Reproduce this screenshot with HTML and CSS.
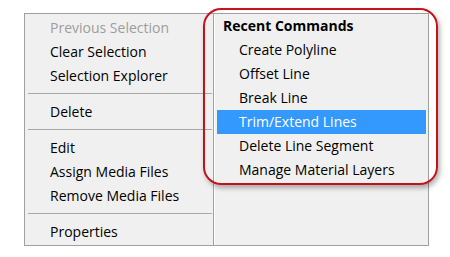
FILE: index.html
```html
<!DOCTYPE html>
<html>
<head>
<meta charset="utf-8">
<link rel="stylesheet" href="styles.css">
</head>
<body>
<div class="stage">
  <div class="menu">
    <div class="col left">
      <div class="item disabled">Previous Selection</div>
      <div class="item">Clear Selection</div>
      <div class="item">Selection Explorer</div>
      <div class="sep"></div>
      <div class="item">Delete</div>
      <div class="sep"></div>
      <div class="item">Edit</div>
      <div class="item">Assign Media Files</div>
      <div class="item">Remove Media Files</div>
      <div class="sep"></div>
      <div class="item">Properties</div>
    </div>
    <div class="vsep"></div>
    <div class="col right">
      <div class="header">Recent Commands</div>
      <div class="item">Create Polyline</div>
      <div class="item">Offset Line</div>
      <div class="item">Break Line</div>
      <div class="item active">Trim/Extend Lines</div>
      <div class="item">Delete Line Segment</div>
      <div class="item">Manage Material Layers</div>
    </div>
  </div>
  <div class="callout"></div>
</div>
</body>
</html>
```
FILE: styles.css
```css
html, body {
  margin: 0;
  padding: 0;
  background: #ffffff;
}
body {
  width: 450px;
  height: 257px;
  overflow: hidden;
  font-family: "Open Sans", "Noto Sans", sans-serif;
  font-size: 14px;
  color: #000;
}
.stage {
  position: relative;
  width: 450px;
  height: 257px;
  padding: 13px 0 0 24px;
  box-sizing: border-box;
}
.menu {
  width: 405px;
  height: 233px;
  box-sizing: border-box;
  border: 1px solid #a0a0a0;
  background: #f0f0f0;
  display: flex;
}
.col {
  display: flex;
  flex-direction: column;
}
.left {
  width: 188px;
  padding-top: 2px;
}
.left .item {
  padding-left: 25px;
}
.item {
  height: 24px;
  line-height: 24px;
  white-space: nowrap;
}
.disabled {
  color: #9d9d9d;
}
.sep {
  height: 1px;
  margin: 5px 1px 6px 3px;
  background: #a8a8a8;
}
.vsep {
  width: 1px;
  background: #a0a0a0;
  border-right: 1px solid #ffffff;
}
.right {
  flex: 1;
}
.header {
  height: 24px;
  line-height: 24px;
  padding-left: 8px;
  font-weight: bold;
}
.right .item {
  padding-left: 22px;
  margin: 0 2px;
}
.right .active {
  background: #3399ff;
  color: #ffffff;
}
.callout {
  position: absolute;
  left: 203px;
  top: 8px;
  width: 235px;
  height: 177px;
  box-sizing: border-box;
  border: 2px solid #c4121c;
  border-radius: 18px;
  box-shadow: 2px 3px 5px rgba(0, 0, 0, 0.3);
}
```
